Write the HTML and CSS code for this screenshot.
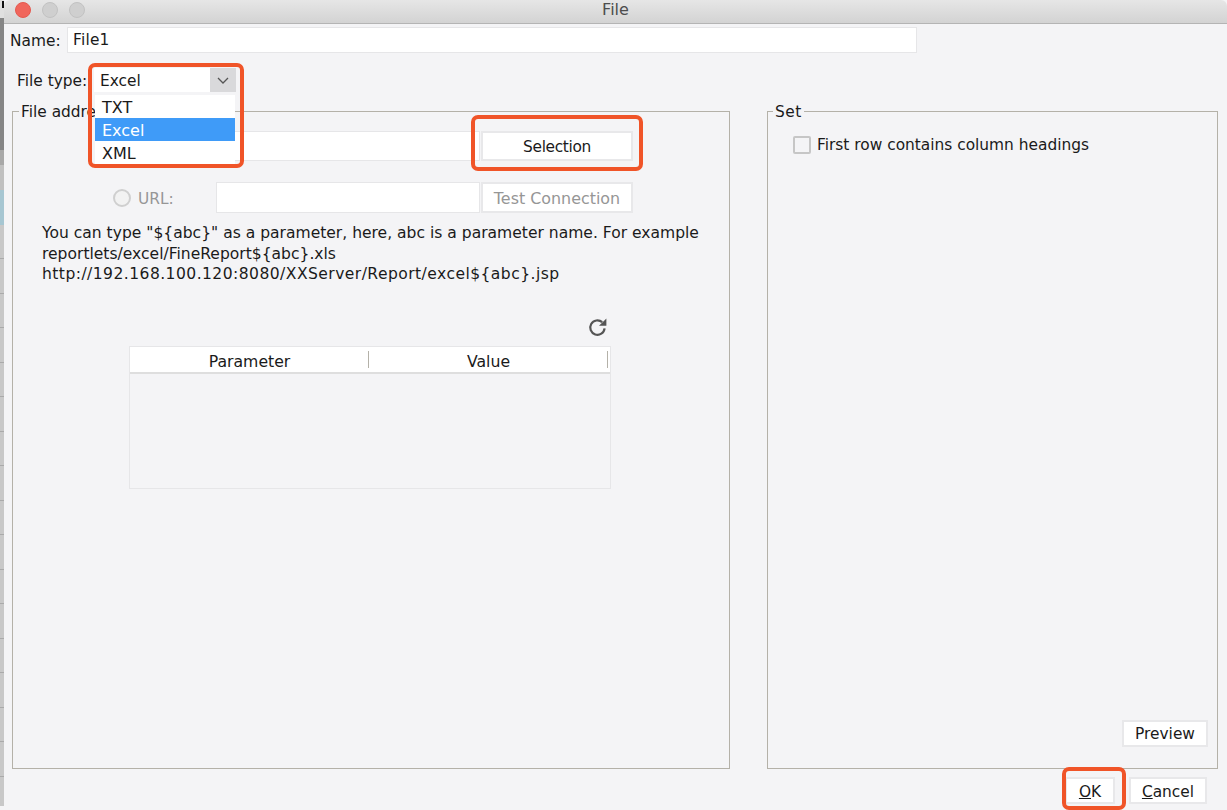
FILE: index.html
```html
<!DOCTYPE html>
<html lang="en">
<head>
<meta charset="utf-8">
<title>File</title>
<link rel="stylesheet" href="styles.css">
</head>
<body>
<div class="screen">
  <div class="backstrip">
    <div class="strip-top"><span class="strip-glyph"></span></div>
    <div class="strip-blue"></div>
    <div class="strip-rows"></div>
  </div>
  <div class="window">
    <header class="titlebar">
      <span class="light light-red"></span>
      <span class="light"></span>
      <span class="light"></span>
      <span class="title">File</span>
    </header>
    <div class="name-row">
      <label class="name-label">Name:</label>
      <div class="field name-field">File1</div>
    </div>
    <div class="type-row">
      <label class="type-label">File type:</label>
      <div class="combo">
        <span class="combo-value">Excel</span>
        <span class="combo-arrow">
          <svg width="12" height="7" viewBox="0 0 12 7"><path d="M1 1l5 5 5-5" fill="none" stroke="#555" stroke-width="1.3"/></svg>
        </span>
        <ul class="popup">
          <li>TXT</li>
          <li class="selected">Excel</li>
          <li>XML</li>
        </ul>
        <div class="mark mark-combo"></div>
      </div>
    </div>
    <div class="panels">
      <section class="group group-left">
        <span class="legend">File address</span>
        <div class="addr-row addr-first">
          <div class="field addr-field"></div>
          <div class="btn addr-btn btn-selection"><span>Selection</span><div class="mark mark-selection"></div></div>
        </div>
        <div class="addr-row addr-second">
          <span class="radio"></span>
          <span class="url-label">URL:</span>
          <div class="field addr-field url-field"></div>
          <div class="btn addr-btn btn-disabled"><span>Test Connection</span></div>
        </div>
        <p class="hint">You can type "${abc}" as a parameter, here, abc is a parameter name. For example<br>reportlets/excel/FineReport${abc}.xls<br><span class="hint-url">http://192.168.100.120:8080/XXServer/Report/excel${abc}.jsp</span></p>
        <div class="refresh-row">
          <svg width="22" height="22" viewBox="0 0 22 22"><path d="M17.6 12.4a7.2 7.2 0 1 1-2.4-6.2" fill="none" stroke="#555" stroke-width="2.2"/><path d="M19.4 2.4v7.4h-7.4z" fill="#555"/></svg>
        </div>
        <div class="table">
          <div class="thead">
            <div class="th th-first">Parameter</div>
            <div class="th th-second">Value</div>
          </div>
        </div>
      </section>
      <section class="group group-right">
        <span class="legend">Set</span>
        <div class="check-row">
          <span class="checkbox"></span>
          <span>First row contains column headings</span>
        </div>
        <div class="btn preview-btn"><span>Preview</span></div>
      </section>
    </div>
    <footer class="actions">
      <div class="btn ok-btn"><span><u>O</u>K</span><div class="mark mark-ok"></div></div>
      <div class="btn cancel-btn"><span><u>C</u>ancel</span></div>
    </footer>
  </div>
</div>
</body>
</html>
```
FILE: styles.css
```css
* { box-sizing: border-box; }
html, body { margin: 0; padding: 0; }
body {
  width: 1227px;
  height: 810px;
  overflow: hidden;
  font-family: "DejaVu Sans", sans-serif;
  font-size: 15.4px;
  color: #1a1a1a;
  background: #f4f4f6;
}
.screen { display: flex; width: 1227px; height: 810px; }

.backstrip { width: 4px; flex: none; display: flex; flex-direction: column; background: #f4f4f6; overflow: hidden; }
.strip-top {
  height: 190px;
  flex: none;
  display: flex;
  flex-direction: column;
  background: linear-gradient(#e0e0e0 0 18px, #858585 18px 150px, #a8a8a8 150px 165px, #c0c0c0 165px 190px);
}
.strip-glyph { width: 2px; height: 7px; margin: 1px 0 0 2px; background: #111; }
.strip-blue { height: 35px; flex: none; background: #a6c6d2; }
.strip-rows {
  flex: 1;
  margin-bottom: 4px;
  background: repeating-linear-gradient(#c8c8c8 0 33.5px, #aaa 33.5px 34.5px);
}

.window {
  flex: 1;
  display: flex;
  flex-direction: column;
  background: #f4f4f6;
  border-radius: 6px;
}
.titlebar {
  height: 24px;
  flex: none;
  display: flex;
  align-items: center;
  gap: 11px;
  padding: 0 0 3px 11px;
  position: relative;
  background: linear-gradient(#e6e6e6, #d3d3d3);
  border-bottom: 1px solid #b4b4b4;
  border-radius: 6px 6px 0 0;
}
.light { width: 16px; height: 16px; border-radius: 50%; background: #cfcfcf; border: 1px solid #c2c2c2; }
.light-red { background: #f0665c; border-color: #e5594f; }
.title { position: absolute; left: 0; right: 0; top: 0; line-height: 20px; text-align: center; font-size: 16px; color: #4d4d4d; }

.field { background: #fff; border: 1px solid #e6e6e8; }
.btn {
  background: #fff;
  border: 2px solid #e8e8ea;
  display: flex;
  align-items: center;
  justify-content: center;
  position: relative;
  padding-top: 2px;
}
.btn-disabled { color: #969696; font-size: 15.9px; }
.btn-selection { letter-spacing: -.35px; padding-top: 1px; }

.name-row { display: flex; align-items: center; height: 26px; margin-top: 3px; }
.name-label { margin-left: 6px; width: 57px; flex: none; padding-top: 2px; }
.name-field { width: 850px; height: 26px; padding-left: 5px; line-height: 25px; letter-spacing: .2px; }

.type-row { display: flex; align-items: center; height: 24px; margin-top: 15px; }
.type-label { margin-left: 13px; width: 77px; flex: none; padding-top: 1px; }
.combo { position: relative; width: 142px; height: 24px; display: flex; background: #fff; }
.combo-value { flex: 1; padding-left: 6px; line-height: 27px; }
.combo-arrow { width: 26px; background: #d9d9db; display: flex; align-items: center; justify-content: center; }
.popup {
  list-style: none;
  margin: 0;
  padding: 0;
  position: absolute;
  left: 1px;
  top: 27px;
  width: 140px;
  height: 70px;
  background: #fff;
  z-index: 2;
  font-size: 16px;
}
.popup li { height: 23px; line-height: 25px; padding-left: 7px; }
.popup li.selected { background: #3f9bf8; color: #fff; }

.mark { position: absolute; border: 4px solid #f05428; border-radius: 7px; z-index: 3; pointer-events: none; }
.mark-combo { left: -6px; top: -5px; width: 156px; height: 105px; }
.mark-selection { left: -12px; top: -18px; width: 172px; height: 56px; }
.mark-ok { left: -5px; top: -12px; width: 64px; height: 43px; }

.panels { flex: 1; display: flex; min-height: 0; margin-top: 19px; }
.group { border: 1px solid #b4b1a8; position: relative; }
.group-left { width: 718px; height: 658px; margin-left: 8px; padding-top: 19px; }
.group-right { width: 451px; height: 658px; margin-left: 37px; padding-left: 25px; display: flex; flex-direction: column; }
.legend { position: absolute; left: 6px; top: -9px; padding: 0 2px; background: #f4f4f6; line-height: 18px; }
.group-right .legend { left: 5px; letter-spacing: .5px; }

.addr-row { display: flex; align-items: center; height: 30px; }
.addr-first { padding-left: 203px; }
.addr-second { margin-top: 21px; height: 31px; }
.addr-field { width: 264px; height: 30px; }
.addr-btn { width: 152px; height: 30px; margin-left: 1px; }
.url-field, .btn-disabled { height: 31px; }
.radio { width: 18px; height: 18px; margin-left: 100px; border-radius: 50%; border: 2px solid #cfcfcf; background: #f2f2f2; flex: none; }
.url-label { width: 78px; margin-left: 7px; padding-top: 2px; color: #969696; flex: none; }
.hint { margin: 10px 0 0 29px; font-size: 15.55px; line-height: 20.5px; }
.hint-url { letter-spacing: .45px; }
.refresh-row { display: flex; justify-content: flex-end; padding-right: 120px; margin-top: 31px; height: 22px; }
.table { width: 482px; height: 143px; margin: 8px 0 0 116px; border: 1px solid #e6e6e8; }
.thead { display: flex; height: 27px; background: #fff; border-bottom: 2px solid #dedede; font-size: 15.7px; }
.th { line-height: 30px; text-align: center; position: relative; }
.th-first { width: 239px; }
.th-second { width: 239px; }
.th::after { content: ""; position: absolute; right: 0; top: 4px; bottom: 4px; width: 1px; background: #b4b1a8; }

.check-row { display: flex; align-items: center; gap: 6px; margin-top: 24px; height: 18px; }
.checkbox { width: 18px; height: 18px; border: 2px solid #c6c6c6; background: #f4f4f6; border-radius: 2px; flex: none; }
.preview-btn { width: 86px; height: 27px; padding-top: 1px; margin-top: auto; margin-bottom: 21px; align-self: flex-end; margin-right: 9px; }

.actions { display: flex; justify-content: flex-end; gap: 14px; height: 33px; padding-right: 20px; }
.ok-btn { width: 50px; height: 27px; padding-top: 3px; }
.cancel-btn { width: 78px; height: 27px; padding-top: 3px; }
```
